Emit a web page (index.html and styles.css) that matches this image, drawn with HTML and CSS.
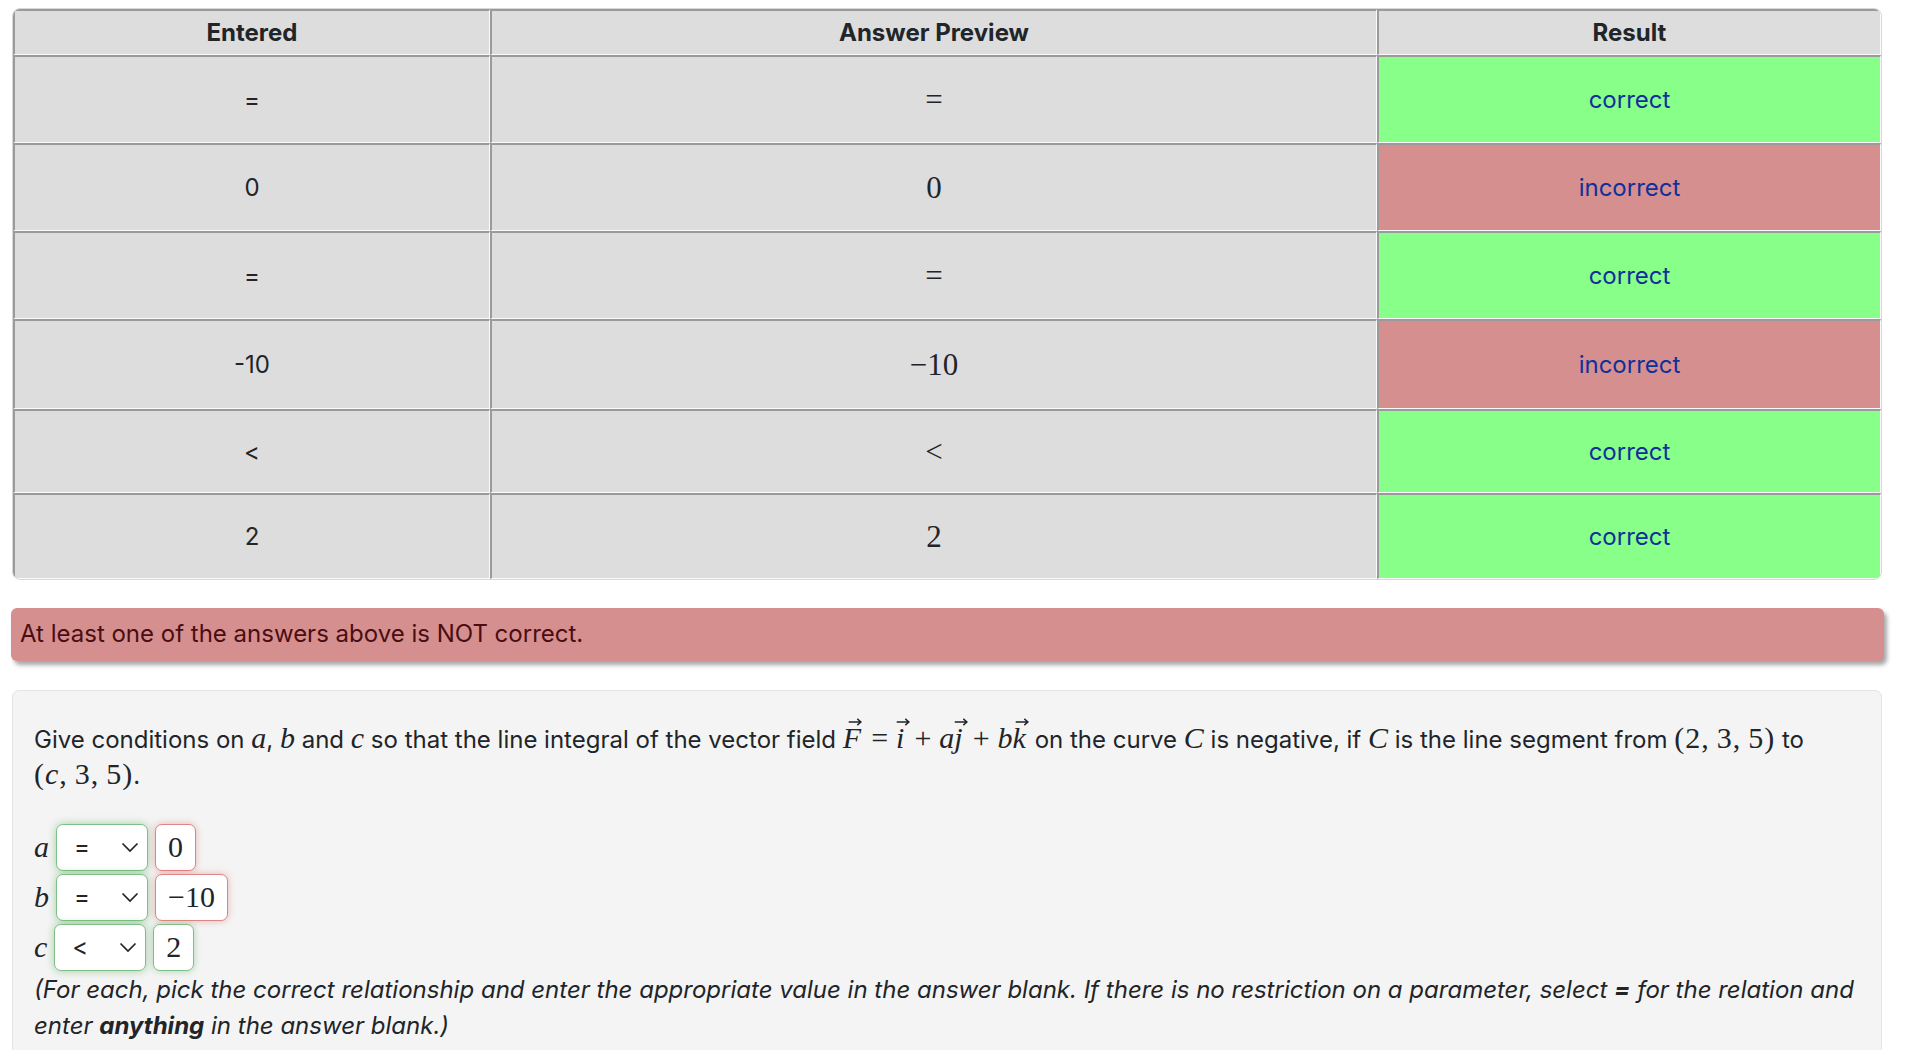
FILE: index.html
```html
<!DOCTYPE html>
<html lang="en">
<head>
<meta charset="utf-8">
<title>Attempt results</title>
<link rel="stylesheet" href="styles.css">
</head>
<body>
<div class="page">
  <div class="results-wrap">
    <table class="results">
      <colgroup>
        <col class="c1"><col class="c2"><col class="c3">
      </colgroup>
      <thead>
        <tr class="hrow"><th>Entered</th><th>Answer Preview</th><th>Result</th></tr>
      </thead>
      <tbody>
        <tr class="r1"><td>=</td><td><span class="mn">=</span></td><td class="ok">correct</td></tr>
        <tr class="r2"><td>0</td><td><span class="mn">0</span></td><td class="bad">incorrect</td></tr>
        <tr class="r3"><td>=</td><td><span class="mn">=</span></td><td class="ok">correct</td></tr>
        <tr class="r4"><td>-10</td><td><span class="mn">−10</span></td><td class="bad">incorrect</td></tr>
        <tr class="r5"><td>&lt;</td><td><span class="mn">&lt;</span></td><td class="ok">correct</td></tr>
        <tr class="r6"><td>2</td><td><span class="mn">2</span></td><td class="ok">correct</td></tr>
      </tbody>
    </table>
  </div>

  <div class="alert">At least one of the answers above is NOT correct.</div>

  <div class="problem">
    <p class="statement">Give conditions on <span class="mi">a</span>, <span class="mi">b</span> and <span class="mi">c</span> so that the line integral of the vector field <span class="math"><span class="vec mi">F<svg class="arrow" viewBox="0 0 12 7"><path d="M0.5 3.5H11M8 0.8L11.2 3.5L8 6.2"/></svg></span><span class="op">=</span><span class="vec mi">i<svg class="arrow" viewBox="0 0 12 7"><path d="M0.5 3.5H11M8 0.8L11.2 3.5L8 6.2"/></svg></span><span class="op">+</span><span class="mi">a</span><span class="vec mi">j<svg class="arrow" viewBox="0 0 12 7"><path d="M0.5 3.5H11M8 0.8L11.2 3.5L8 6.2"/></svg></span><span class="op">+</span><span class="mi">b</span><span class="vec mi">k<svg class="arrow" viewBox="0 0 12 7"><path d="M0.5 3.5H11M8 0.8L11.2 3.5L8 6.2"/></svg></span></span> on the curve <span class="mi">C</span> is negative, if <span class="mi">C</span> is the line segment from <span class="mn tuple">(2,&#8201;3,&#8201;5)</span> to <span class="nowrap"><span class="mn tuple">(<span class="mi">c</span>,&#8201;3,&#8201;5)</span>.</span></p>

    <div class="answers">
      <div class="arow">
        <span class="lbl mi">a</span>
        <div class="sel good"><span class="selv">=</span><svg class="chev" viewBox="0 0 18 11"><path d="M1.5 1.5L9 9L16.5 1.5"/></svg></div>
        <div class="inp wrong"><span class="mn">0</span></div>
      </div>
      <div class="arow">
        <span class="lbl mi">b</span>
        <div class="sel good"><span class="selv">=</span><svg class="chev" viewBox="0 0 18 11"><path d="M1.5 1.5L9 9L16.5 1.5"/></svg></div>
        <div class="inp wrong"><span class="mn">−10</span></div>
      </div>
      <div class="arow">
        <span class="lbl mi">c</span>
        <div class="sel good"><span class="selv">&lt;</span><svg class="chev" viewBox="0 0 18 11"><path d="M1.5 1.5L9 9L16.5 1.5"/></svg></div>
        <div class="inp right"><span class="mn">2</span></div>
      </div>
    </div>

    <p class="note">(For each, pick the correct relationship and enter the appropriate value in the answer blank. If there is no restriction on a parameter, select <b>=</b> for the relation and enter <b>anything</b> in the answer blank.)</p>
  </div>
</div>
</body>
</html>
```

FILE: styles.css
```css
* { box-sizing: border-box; }

html, body {
  margin: 0;
  background: #ffffff;
}

body {
  font-family: Inter, Roboto, "Noto Sans", "Liberation Sans", sans-serif;
  font-size: 24px;
  line-height: 36px;
  color: #212529;
}

.page {
  padding: 8px 32px 0 12px;
}

/* ---------- results table ---------- */
.results-wrap {
  border: 1px solid #d8d8d8;
  border-radius: 8px;
  overflow: hidden;
}

.results {
  width: 100%;
  border-collapse: separate;
  border-spacing: 0;
  table-layout: fixed;
}

.results col.c1 { width: 477px; }
.results col.c2 { width: 887px; }
.results col.c3 { width: auto; }

.results th,
.results td {
  background: #dddddd;
  text-align: center;
  vertical-align: middle;
  padding: 0 8px;
  border-top: 2px solid #9a9a9a;
  border-left: 2px solid #9a9a9a;
  border-bottom: 1px solid #fbfbfb;
  border-right: 1px solid #fbfbfb;
}

.results th {
  font-weight: 700;
  height: 46px;
}

.results tr.r1 td { height: 88px; }
.results tr.r2 td { height: 88px; }
.results tr.r3 td { height: 88px; }
.results tr.r4 td { height: 90px; }
.results tr.r5 td { height: 84px; }
.results tr.r6 td { height: 86px; }

.results td.ok {
  background: #88ff88;
  color: #10309a;
}

.results td.bad {
  background: #d68f8f;
  color: #10309a;
}

.results .mn {
  font-size: 31px;
  position: relative;
  top: 2px;
}

/* ---------- math-ish text ---------- */
.mi {
  font-family: "Liberation Serif", "DejaVu Serif", serif;
  font-style: italic;
  font-size: 30px;
  line-height: 1;
}

.mn {
  font-family: "Liberation Serif", "DejaVu Serif", serif;
  font-style: normal;
  font-size: 30px;
  line-height: 1;
}

.mn .mi { font-size: 1em; }

.tuple { letter-spacing: 1px; white-space: nowrap; }

.nowrap { white-space: nowrap; }

.math { white-space: nowrap; }

.op {
  font-family: "Liberation Serif", "DejaVu Serif", serif;
  font-size: 30px;
  line-height: 1;
  padding: 0 8px;
}

.vec {
  position: relative;
  display: inline-block;
  padding-right: 2px;
}

.vec .arrow {
  position: absolute;
  left: 50%;
  top: -5px;
  width: 14px;
  height: 8px;
  margin-left: -5px;
  fill: none;
  stroke: #212529;
  stroke-width: 1.3;
}

/* ---------- alert ---------- */
.alert {
  margin: 28px -2px 0 -1px;
  padding: 8px 9px 9px;
  background: #d68f8f;
  color: #4a0d12;
  border-radius: 6px;
  box-shadow: 3px 4px 4px rgba(0, 0, 0, 0.35);
}

/* ---------- problem ---------- */
.problem {
  margin-top: 29px;
  background: #f4f4f4;
  border: 1px solid #e4e4e4;
  border-radius: 7px;
  padding: 31px 21px 40px;
}

.statement {
  margin: 0 0 28px;
}

.answers {
  display: flex;
  flex-direction: column;
}

.arow {
  display: flex;
  align-items: center;
  height: 50px;
  gap: 7px;
}

.lbl {
  min-width: 12px;
}

.sel {
  width: 92px;
  height: 47px;
  display: flex;
  align-items: center;
  justify-content: space-between;
  padding: 0 8px 0 17px;
  background: #ffffff;
  border: 1px solid #7fbf86;
  border-radius: 7px;
  box-shadow: 0 0 8px rgba(60, 160, 70, 0.45);
}

.selv {
  font-size: 24px;
}

.chev {
  width: 18px;
  height: 11px;
  fill: none;
  stroke: #212529;
  stroke-width: 1.7;
}

.inp {
  height: 47px;
  display: flex;
  align-items: center;
  padding: 0 12px;
  background: #ffffff;
  border-radius: 7px;
}

.inp.wrong {
  border: 1px solid #e08585;
  box-shadow: 0 0 7px rgba(220, 80, 80, 0.4);
}

.inp.right {
  border: 1px solid #7fbf86;
  box-shadow: 0 0 7px rgba(60, 160, 70, 0.4);
}

.note {
  margin: 0;
  font-style: italic;
}

.note b { font-weight: 700; }
```
